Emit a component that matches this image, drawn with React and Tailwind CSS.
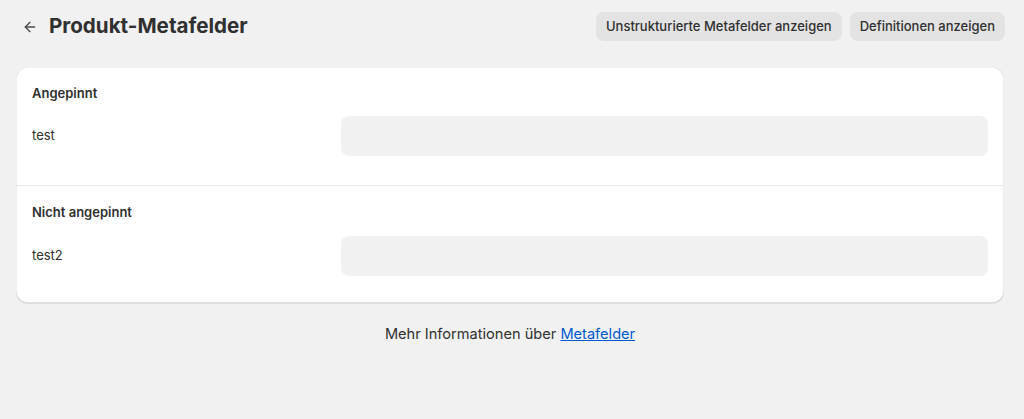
import { ArrowLeft } from 'lucide-react'

function Section({ title, label, border }) {
  return (
    <div className={`px-4 pt-4 ${border ? 'border-t border-[#ebebeb] pb-[27px]' : 'pb-[29px]'}`}>
      <p className="text-[13px] leading-5 font-semibold text-[#303030]">{title}</p>
      <div className={`flex items-center ${border ? 'mt-[14px]' : 'mt-[13px]'}`}>
        <div className="w-[309px] text-[13px] text-[#303030]">{label}</div>
        <div className="flex-1 h-10 rounded-lg bg-[#f1f1f1]"></div>
      </div>
    </div>
  )
}

export default function App() {
  return (
    <div
      className="min-h-[419px] bg-[#f1f1f1] pl-4 pr-5 pt-3"
      style={{ fontFamily: 'Inter, "Noto Sans", sans-serif' }}
    >
      {/* Header */}
      <div className="flex items-center justify-between h-[29px]">
        <div className="flex items-center">
          <ArrowLeft className="w-4 h-4 ml-[6px] text-[#4a4a4a]" strokeWidth={2} />
          <h1 className="ml-[11px] text-[20.6px] font-bold text-[#303030]">Produkt-Metafelder</h1>
        </div>
        <div className="flex items-center gap-2 mr-[-1px]">
          <button className="h-[29px] px-[10px] rounded-lg bg-[#e3e3e3] text-[13px] font-medium text-[#303030]">
            Unstrukturierte Metafelder anzeigen
          </button>
          <button className="h-[29px] px-[10px] rounded-lg bg-[#e3e3e3] text-[13px] font-medium text-[#303030]">
            Definitionen anzeigen
          </button>
        </div>
      </div>

      {/* Card */}
      <div className="mt-[26px] bg-white rounded-xl overflow-hidden shadow-[0_1px_0_rgba(0,0,0,0.08),inset_0_-1px_0_rgba(0,0,0,0.12),inset_-1px_0_0_rgba(0,0,0,0.08),inset_1px_0_0_rgba(0,0,0,0.06),inset_0_1px_0_rgba(0,0,0,0.05)]">
        <Section title="Angepinnt" label="test" />
        <Section title="Nicht angepinnt" label="test2" border />
      </div>

      {/* Footer */}
      <p className="mt-[21px] text-center text-[14.6px] text-[#303030]">
        Mehr Informationen über{' '}
        <a href="#" className="text-[#005bd3] underline">Metafelder</a>
      </p>
    </div>
  )
}
